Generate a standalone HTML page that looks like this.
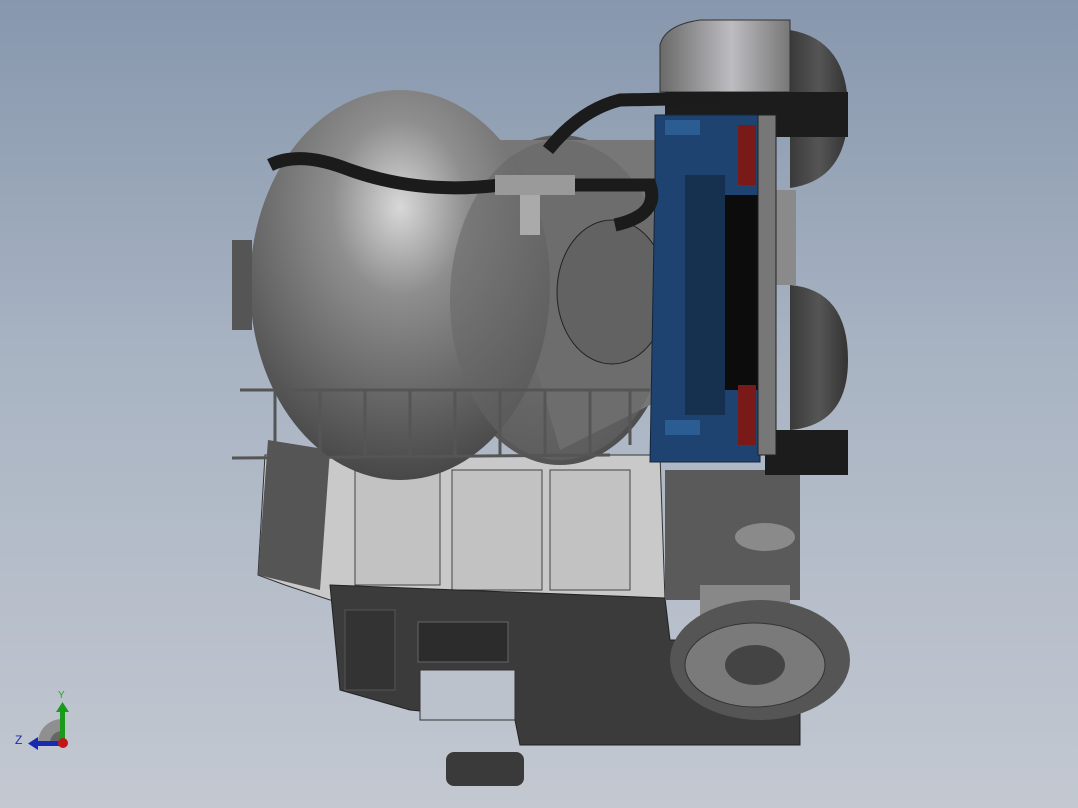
<!DOCTYPE html>
<html><head><meta charset="utf-8"><style>
html,body{margin:0;padding:0;width:1078px;height:808px;overflow:hidden}
body{background:linear-gradient(180deg,#8797ad 0%,#a9b4c3 45%,#c3c8d1 100%);font-family:"Liberation Sans",sans-serif}
</style></head><body>
<svg width="1078" height="808" viewBox="0 0 1078 808" xmlns="http://www.w3.org/2000/svg">
<defs>
<radialGradient id="sph" cx="0.5" cy="0.3" r="0.75">
<stop offset="0" stop-color="#d8d8d8"/><stop offset="0.3" stop-color="#8e8e8e"/><stop offset="1" stop-color="#404040"/></radialGradient>
<radialGradient id="cyl" cx="0.4" cy="0.45" r="0.7">
<stop offset="0" stop-color="#8a8a8a"/><stop offset="1" stop-color="#444"/></radialGradient>
<linearGradient id="tire" x1="0" x2="1"><stop offset="0" stop-color="#6a6a6a"/><stop offset="0.55" stop-color="#bdbcc0"/><stop offset="1" stop-color="#777"/></linearGradient>
<linearGradient id="tr" x1="0" x2="1"><stop offset="0" stop-color="#3a3a3a"/><stop offset="0.5" stop-color="#555"/><stop offset="1" stop-color="#333"/></linearGradient>
</defs>
<!-- lower cab -->
<path d="M265 455 L660 455 L665 600 L330 600 L285 585 L258 575 Z" fill="#c9c9c9" stroke="#333" stroke-width="1"/>
<path d="M355 470 h85 v115 h-85 z M452 470 h90 v120 h-90 z M550 470 h80 v120 h-80 z" fill="#c2c2c2" stroke="#444"/>
<path d="M258 575 L268 440 L330 450 L320 590 Z" fill="#555"/>
<path d="M330 585 L665 598 L670 640 L800 640 L800 745 L520 745 L515 720 L410 710 L340 690 Z" fill="#3b3b3b" stroke="#222"/>
<rect x="418" y="622" width="90" height="40" fill="#2c2c2c" stroke="#666"/>
<rect x="345" y="610" width="50" height="80" fill="#333" stroke="#555"/>
<path d="M420 670 h95 v50 h-95z" fill="#bcc2cc" stroke="#333"/>
<rect x="446" y="752" width="78" height="34" rx="8" fill="#3a3a3a"/>
<!-- right side parts -->
<rect x="665" y="470" width="135" height="130" fill="#5a5a5a"/>
<rect x="700" y="585" width="90" height="40" fill="#888"/>
<ellipse cx="765" cy="537" rx="30" ry="14" fill="#8a8a8a"/>
<!-- wheels -->
<path d="M790 30 Q848 40 848 110 Q848 180 790 188 Z" fill="url(#tr)"/>
<path d="M790 285 Q848 290 848 360 Q848 425 790 430 Z" fill="url(#tr)"/>
<rect x="776" y="190" width="20" height="95" fill="#8a8a8a"/>
<path d="M660 45 Q665 25 700 20 L790 20 L790 92 L660 92 Z" fill="url(#tire)" stroke="#333"/>
<ellipse cx="760" cy="660" rx="90" ry="60" fill="#555"/>
<ellipse cx="755" cy="665" rx="70" ry="42" fill="#7a7a7a" stroke="#333"/>
<ellipse cx="755" cy="665" rx="30" ry="20" fill="#444"/>
<rect x="665" y="92" width="183" height="45" fill="#1c1c1c"/>
<rect x="765" y="430" width="83" height="45" fill="#1c1c1c"/>
<!-- cylinder behind sphere -->
<ellipse cx="560" cy="300" rx="115" ry="165" fill="url(#cyl)"/>
<path d="M470 140 L660 140 L660 400 L560 450 Z" fill="#777"/>
<!-- sphere -->
<ellipse cx="400" cy="285" rx="150" ry="195" fill="url(#sph)"/>
<ellipse cx="560" cy="300" rx="110" ry="160" fill="#666" opacity="0.55"/>
<ellipse cx="612" cy="292" rx="55" ry="72" fill="#626262" stroke="#222"/>
<rect x="232" y="240" width="20" height="90" fill="#555"/>
<!-- blue frame -->
<path d="M655 115 L760 115 L760 462 L650 462 L655 180 Z" fill="#1f4370" stroke="#14243a"/>
<rect x="665" y="120" width="35" height="15" fill="#2b5d92"/>
<rect x="665" y="420" width="35" height="15" fill="#2b5d92"/>
<rect x="685" y="175" width="40" height="240" fill="#16304f"/>
<rect x="725" y="195" width="35" height="195" fill="#0c0c0c"/>
<rect x="738" y="125" width="18" height="60" fill="#7a1a18"/>
<rect x="738" y="385" width="18" height="60" fill="#7a1a18"/>
<rect x="758" y="115" width="18" height="340" fill="#777" stroke="#222"/>
<!-- hose -->
<path d="M270 165 Q300 150 350 170 Q420 195 500 185 L650 185 Q660 215 615 225" fill="none" stroke="#1b1b1b" stroke-width="13"/>
<path d="M548 150 Q580 110 620 100 L720 98" fill="none" stroke="#1b1b1b" stroke-width="13"/>
<rect x="495" y="175" width="80" height="20" fill="#9a9a9a"/>
<rect x="520" y="195" width="20" height="40" fill="#aaa"/>
<!-- ladder -->
<g stroke="#555" stroke-width="3" fill="none">
<line x1="240" y1="390" x2="650" y2="390"/><line x1="232" y1="458" x2="610" y2="455"/>
<path d="M275 390v65M320 390v65M365 390v65M410 390v65M455 390v65M500 390v65M545 390v65M590 390v65M630 390v55"/>
</g>
<!-- axis triad -->
<path d="M62 743 L38 743 A24 24 0 0 1 62 719 Z" fill="#8f8f8f"/>
<path d="M62 743 L50 743 A12 12 0 0 1 62 731 Z" fill="#666"/>
<rect x="60" y="708" width="5" height="35" fill="#1a9a1a"/><path d="M56 712 L62.5 702 L69 712 Z" fill="#1a9a1a"/>
<rect x="36" y="741" width="26" height="5" fill="#1a2ab0"/><path d="M38 737 L28 743.5 L38 750 Z" fill="#1a2ab0"/>
<circle cx="63" cy="743" r="5" fill="#c01818"/>
<text x="58" y="698" font-size="10" fill="#18b018">Y</text>
<text x="15" y="744" font-size="12" fill="#1a2ab0">Z</text>
</svg>
</body></html>
